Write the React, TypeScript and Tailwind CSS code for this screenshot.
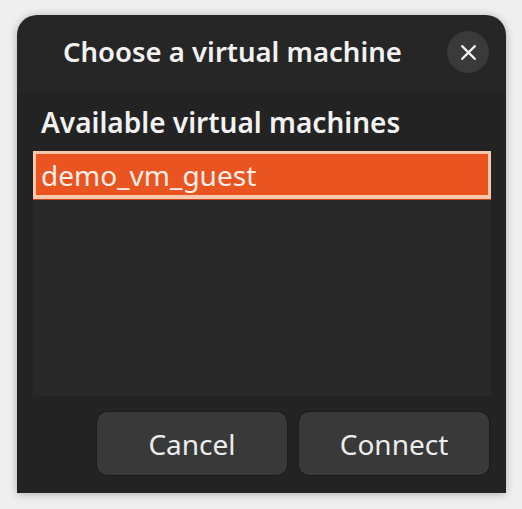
import React from 'react';

export default function App() {
  return (
    <div
      className="w-[522px] h-[509px] bg-[#efefef] pt-[15px] pl-[17px] overflow-hidden"
      style={{ fontFamily: '"Noto Sans", "Open Sans", sans-serif' }}
    >
      <div className="w-[489px] h-[478px] rounded-t-[20px] overflow-hidden flex flex-col shadow-[0_1px_9px_rgba(0,0,0,0.28)]">
        {/* Header bar */}
        <div className="h-[78px] bg-[#262626] flex items-center shrink-0">
          <div className="pl-[46px] pb-[4px] text-[27.5px] leading-[36px] font-semibold text-[#f2f2f2]">
            Choose a virtual machine
          </div>
          <button className="ml-auto mr-[17px] mb-[4px] w-[42px] h-[42px] rounded-full bg-[#3a3a3a] flex items-center justify-center">
            <svg width="17" height="17" viewBox="0 0 16 16">
              <path d="M2 2 L14 14 M14 2 L2 14" stroke="#f4f4f4" strokeWidth="2" strokeLinecap="round" />
            </svg>
          </button>
        </div>

        {/* Body */}
        <div className="flex-1 bg-[#232323] pl-[16px] pr-[15px] flex flex-col">
          <div className="h-[58px] flex items-center pl-[8px] pb-[1px] text-[28px] leading-[36px] font-semibold text-[#f2f2f2]">
            Available virtual machines
          </div>

          <div className="h-[245px] bg-[#282828] shrink-0">
            <div className="h-[48px] bg-[#e95420] border-[3px] border-[#f8c8ac] border-b-[4px] flex items-center pl-[5px] text-[28px] leading-[36px] text-[#fbeee8] shadow-[0_1px_0_#c4431a]">
              demo_vm_guest
            </div>
          </div>

          <div className="flex justify-end gap-[12px] pt-[16px] pr-[2px]">
            <button className="w-[190px] h-[63px] rounded-[10px] bg-[#393939] ring-1 ring-[#1c1c1c] text-[28px] leading-[36px] text-[#ececec]">
              Cancel
            </button>
            <button className="w-[190px] h-[63px] rounded-[10px] bg-[#393939] ring-1 ring-[#1c1c1c] text-[28px] leading-[36px] text-[#ececec]">
              Connect
            </button>
          </div>
        </div>
      </div>
    </div>
  );
}
